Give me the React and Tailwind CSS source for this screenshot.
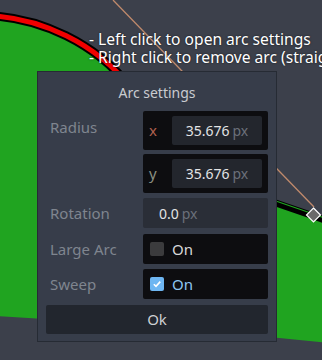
import React from "react";

function Canvas() {
  return (
    <svg
      className="absolute left-0 top-0"
      width="322"
      height="360"
      viewBox="0 0 322 360"
    >
      <path
        d="M -5 16 C 40 19 95 42 130 87 L 277 203.5 L 313.5 216 L 330 222 L 330 343 Q 150 325 -5 316 Z"
        fill="#20a420"
      />
      <path d="M -5 16 C 40 19 95 42 130 87" fill="none" stroke="#000" strokeWidth="9" />
      <path d="M -5 16 C 40 19 95 42 130 87" fill="none" stroke="#f00000" strokeWidth="5" />
      <path d="M 270 201 L 313.5 216 L 330 222" fill="none" stroke="#000" strokeWidth="7" />
      <path d="M 270 199 L 313.5 214 L 330 220" fill="none" stroke="#20a420" strokeWidth="1.2" />
      <line x1="113" y1="0" x2="314" y2="207" stroke="#c08a6c" strokeWidth="1.3" />
      <polygon
        points="313.5,208 320.5,215 313.5,222 306.5,215"
        fill="#6a6a6a"
        stroke="#ffffff"
        strokeWidth="1.2"
      />
    </svg>
  );
}

function Label({ children }) {
  return (
    <div className="w-[97px] shrink-0 pl-[4px] text-[15px] text-[#7f858f]">
      {children}
    </div>
  );
}

function AxisField({ axis, color, value }) {
  return (
    <div className="flex h-[39px] w-[125px] items-center rounded-[2px] bg-[#0d0d10]">
      <span className={`w-[29px] pl-[6px] text-[15px] ${color}`}>{axis}</span>
      <div className="flex h-[29px] w-[90px] items-center justify-center rounded-[2px] bg-[#23262d] text-[14px]">
        <span className="text-[#e2e3e5]">{value}</span>
        <span className="ml-[3px] text-[#6b707a]">px</span>
      </div>
    </div>
  );
}

function CheckField({ checked }) {
  return (
    <div className="flex h-[30px] w-[125px] items-center rounded-[2px] bg-[#0d0d10] pl-[7px]">
      {checked ? (
        <div className="flex h-[14px] w-[14px] items-center justify-center rounded-[2px] bg-[#6eb6f2]">
          <svg width="10" height="10" viewBox="0 0 10 10">
            <path d="M1.8 5.2 L4 7.4 L8.3 2.6" fill="none" stroke="#fff" strokeWidth="1.6" />
          </svg>
        </div>
      ) : (
        <div className="h-[14px] w-[14px] rounded-[2px] bg-[#3b3b3d]" />
      )}
      <span
        className={`ml-[8px] text-[15px] ${checked ? "text-[#8ec6f2]" : "text-[#d6d7d9]"}`}
      >
        On
      </span>
    </div>
  );
}

export default function App() {
  return (
    <div
      className="relative h-[360px] w-[322px] overflow-hidden bg-[#3c404b]"
      style={{ fontFamily: '"Noto Sans", sans-serif' }}
    >
      <Canvas />
      <div className="absolute left-[89px] top-[30px] flex flex-col whitespace-nowrap text-[15.6px] leading-[18px] text-white [text-shadow:0_0_2px_rgba(0,0,0,0.7)]">
        <span>- Left click to open arc settings</span>
        <span>- Right click to remove arc (straight line)</span>
      </div>
      <div className="absolute left-[37px] top-[71px] flex h-[271px] w-[240px] flex-col border border-[#262b34] bg-[#373d4a] px-[8px]">
        <div className="flex h-[39px] items-center justify-center pt-[2px] text-[14px] text-[#c9cbd0]">
          Arc settings
        </div>
        <div className="flex items-start">
          <div className="pt-[5px]">
            <Label>Radius</Label>
          </div>
          <div className="flex flex-col gap-[4px]">
            <AxisField axis="x" color="text-[#b0604f]" value="35.676" />
            <AxisField axis="y" color="text-[#8a8f80]" value="35.676" />
          </div>
        </div>
        <div className="mt-[5px] flex items-center">
          <Label>Rotation</Label>
          <div className="flex h-[30px] w-[125px] items-center rounded-[2px] bg-[#2a2e37] pl-[16px] text-[14px]">
            <span className="text-[#e2e3e5]">0.0</span>
            <span className="ml-[3px] text-[#6b707a]">px</span>
          </div>
        </div>
        <div className="mt-[6px] flex items-center">
          <Label>Large Arc</Label>
          <CheckField checked={false} />
        </div>
        <div className="mt-[5px] flex items-center">
          <Label>Sweep</Label>
          <CheckField checked={true} />
        </div>
        <div className="mt-[6px] flex h-[29px] w-[222px] items-center justify-center rounded-[2px] bg-[#22262e] text-[15px] text-[#cfd0d3]">
          Ok
        </div>
      </div>
    </div>
  );
}
